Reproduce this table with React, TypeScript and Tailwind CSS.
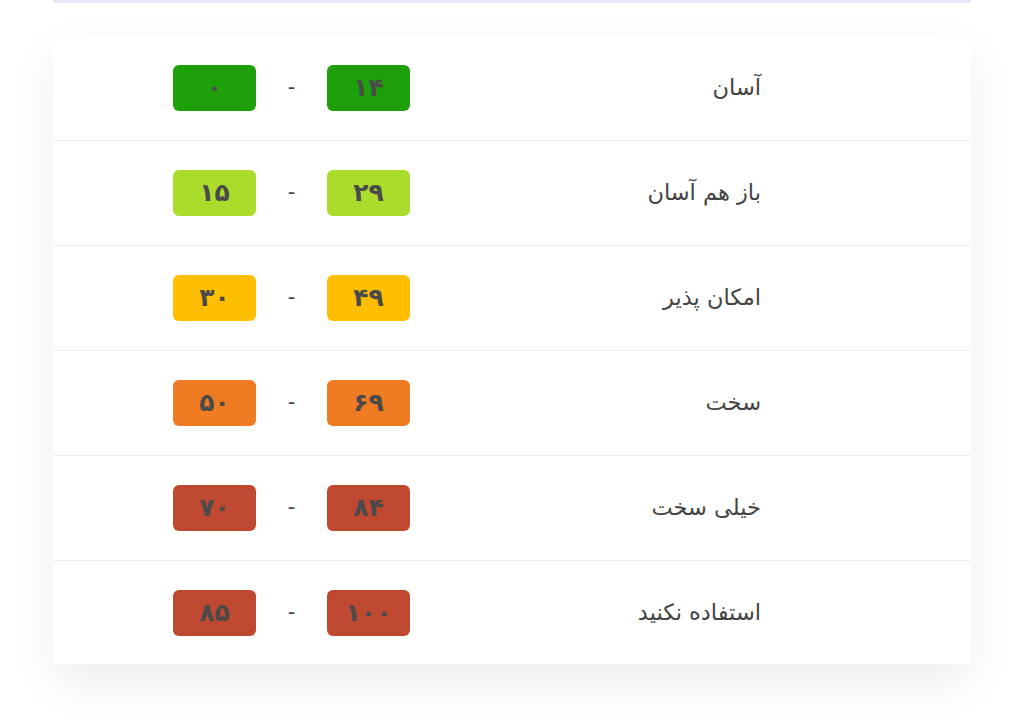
import React from "react"

interface Level {
  label: string
  max: string
  min: string
  color: string
}

const levels: Level[] = [
  { label: "آسان", max: "۱۴", min: "۰", color: "bg-[#1ea00a]" },
  { label: "باز هم آسان", max: "۲۹", min: "۱۵", color: "bg-[#abdc2c]" },
  { label: "امکان پذیر", max: "۴۹", min: "۳۰", color: "bg-[#ffbf00]" },
  { label: "سخت", max: "۶۹", min: "۵۰", color: "bg-[#ef7b23]" },
  { label: "خیلی سخت", max: "۸۴", min: "۷۰", color: "bg-[#bf4830]" },
  { label: "استفاده نکنید", max: "۱۰۰", min: "۸۵", color: "bg-[#bf4830]" },
]

function Badge({ value, color }: { value: string; color: string }) {
  return (
    <div className={`w-[83px] h-[46px] rounded-[6px] flex items-center justify-center text-[25px] font-bold tracking-[2px] text-[#4a4a4a] ${color}`}>
      {value}
    </div>
  )
}

export default function App() {
  return (
    <div className="w-[1012px] h-[721px] bg-white overflow-hidden" style={{ fontFamily: '"DejaVu Sans", "Noto Sans", sans-serif' }}>
      {/* Previous block edge */}
      <div className="ml-[53px] w-[918px] h-[3px] bg-[#e4e9fd] rounded-b-[3px]" />

      {/* Levels card */}
      <div dir="rtl" className="ml-[53px] w-[918px] mt-[33px] bg-white shadow-[0_18px_45px_rgba(0,0,0,0.07)]">
        {levels.map((lv, i) => (
          <div
            key={lv.label}
            className={`flex items-center ${i < levels.length - 1 ? "h-[105px] border-b border-[#ebedef]" : "h-[103px]"}`}
          >
            <div className="w-[561px] pr-[210px] text-[22.5px] text-[#444]">{lv.label}</div>
            <Badge value={lv.max} color={lv.color} />
            <div className="w-[71px] text-center text-[21px] text-[#444]">-</div>
            <Badge value={lv.min} color={lv.color} />
          </div>
        ))}
      </div>
    </div>
  )
}
